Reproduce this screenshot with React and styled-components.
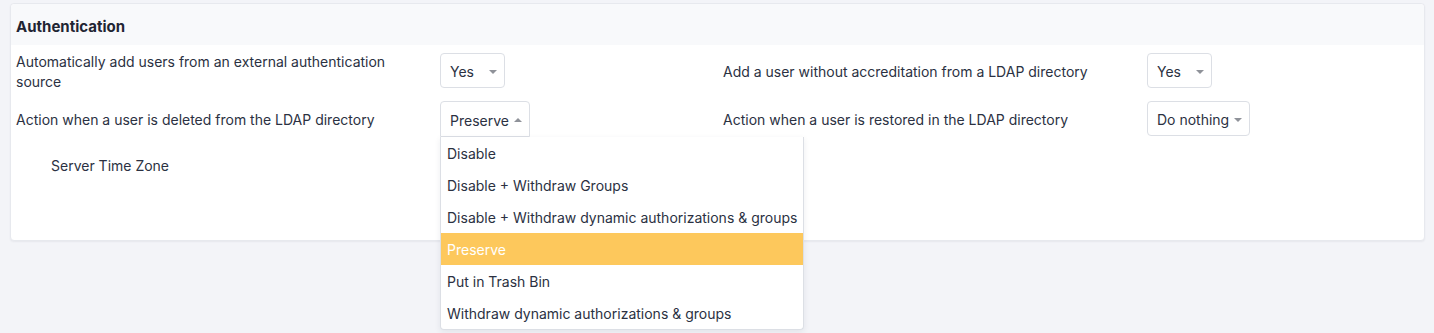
import React from "react";
import styled, { createGlobalStyle } from "styled-components";

const GlobalStyle = createGlobalStyle`
  body {
    margin: 0;
    background: #f3f4f8;
    font-family: Inter, "Noto Sans", sans-serif;
    color: #2b3142;
  }
`;

const Page = styled.div`
  width: 1434px;
  height: 333px;
  padding: 3px 9px 0 10px;
  box-sizing: border-box;
`;

const Card = styled.div`
  background: #fff;
  border: 1px solid #e7e9ee;
  border-radius: 4px;
  box-shadow: 0 1px 2px rgba(30, 40, 60, 0.06);
`;

const Header = styled.div`
  height: 41px;
  box-sizing: border-box;
  padding: 3px 0 0 5px;
  display: flex;
  align-items: center;
  background: #f8f9fb;
  border-radius: 4px 4px 0 0;
  font-size: 15px;
  font-weight: 700;
  color: #1f2533;
`;

const Body = styled.div`
  display: grid;
  grid-template-columns: 414px 273px 414px 1fr;
  column-gap: 10px;
  row-gap: 9px;
  align-items: center;
  padding: 5px 5px 58px;
`;

const Label = styled.div`
  font-size: 14px;
  line-height: 20px;
  padding-top: ${(p) => (p.$indent ? "4px" : "2px")};
  padding-left: ${(p) => (p.$indent ? "35px" : "0")};
`;

const Field = styled.div`
  position: relative;
  display: flex;
  align-items: flex-start;
  height: 36px;
`;

const Select = styled.div`
  position: relative;
  box-sizing: border-box;
  height: ${(p) => (p.$open ? "36px" : "35px")};
  min-width: 65px;
  padding: 2px 20px 0 9px;
  display: flex;
  align-items: center;
  border: 1px solid #dcdfe5;
  border-radius: ${(p) => (p.$open ? "4px 4px 0 0" : "4px")};
  background: #fff;
  font-size: 14px;
  color: #2b3142;
`;

const Caret = styled.span`
  position: absolute;
  right: 7px;
  top: 50%;
  margin-top: -1px;
  width: 0;
  height: 0;
  border-left: 4px solid transparent;
  border-right: 4px solid transparent;
  ${(p) =>
    p.$up
      ? "border-bottom: 4px solid #8f9299;"
      : "border-top: 4px solid #8f9299;"}
`;

const Menu = styled.ul`
  position: absolute;
  top: 36px;
  left: 0;
  z-index: 10;
  width: 364px;
  margin: 0;
  padding: 0;
  list-style: none;
  box-sizing: border-box;
  background: #fff;
  border: 1px solid #dcdfe5;
  border-top: none;
  border-radius: 0 0 4px 4px;
  box-shadow: 0 2px 6px rgba(30, 40, 60, 0.08);
`;

const Option = styled.li`
  height: 32px;
  display: flex;
  align-items: center;
  padding-left: 6px;
  font-size: 14px;
  color: ${(p) => (p.$active ? "#fff" : "#2b3142")};
  background: ${(p) => (p.$active ? "#fdc85c" : "transparent")};
`;

const options = [
  "Disable",
  "Disable + Withdraw Groups",
  "Disable + Withdraw dynamic authorizations & groups",
  "Preserve",
  "Put in Trash Bin",
  "Withdraw dynamic authorizations & groups",
];

const App = () => {
  return (
    <Page>
      <GlobalStyle />
      <Card>
        <Header>Authentication</Header>
        <Body>
          <Label>Automatically add users from an external authentication source</Label>
          <Field>
            <Select>
              Yes
              <Caret />
            </Select>
          </Field>
          <Label>Add a user without accreditation from a LDAP directory</Label>
          <Field>
            <Select>
              Yes
              <Caret />
            </Select>
          </Field>

          <Label>Action when a user is deleted from the LDAP directory</Label>
          <Field>
            <Select $open>
              Preserve
              <Caret $up />
            </Select>
            <Menu>
              {options.map((o) => (
                <Option key={o} $active={o === "Preserve"}>
                  {o}
                </Option>
              ))}
            </Menu>
          </Field>
          <Label>Action when a user is restored in the LDAP directory</Label>
          <Field>
            <Select>
              Do nothing
              <Caret />
            </Select>
          </Field>

          <Label $indent>Server Time Zone</Label>
          <Field />
        </Body>
      </Card>
    </Page>
  );
};

export default App;
